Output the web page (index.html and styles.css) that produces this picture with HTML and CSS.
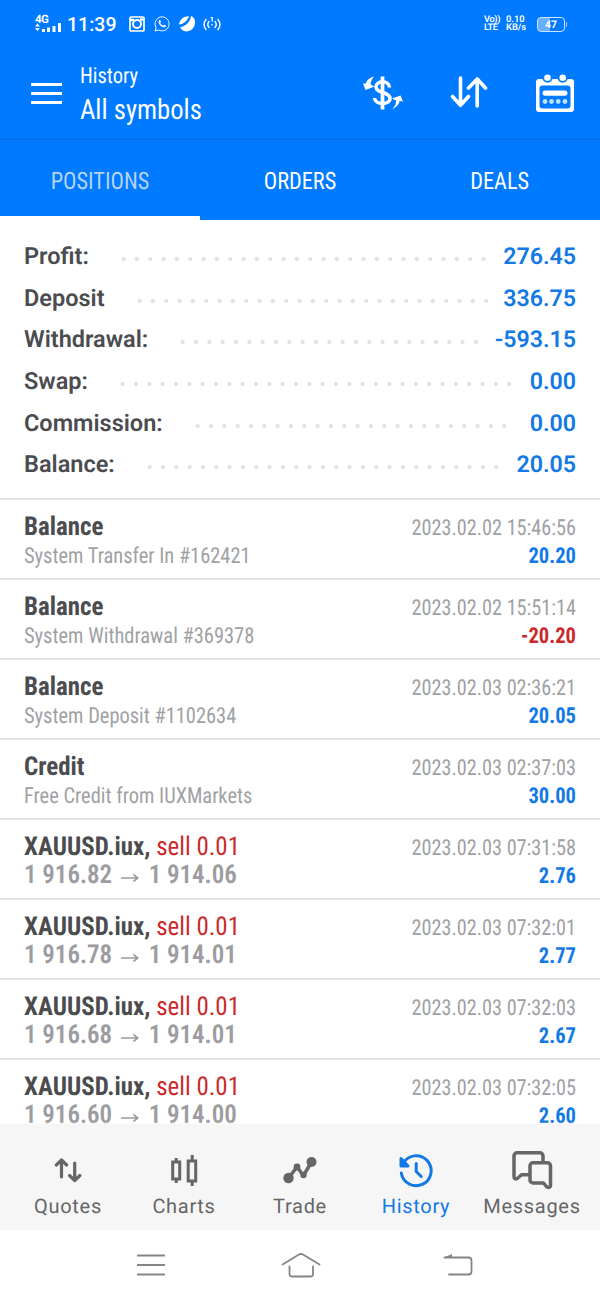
FILE: index.html
```html
<!DOCTYPE html>
<html lang="en">
<head>
<meta charset="utf-8">
<title>History</title>
<link rel="stylesheet" href="styles.css">
</head>
<body>
<div class="app">
  <header class="top">
    <div class="status">
      <div class="signal">
        <span class="net">4G</span>
        <svg width="28" height="9" viewBox="0 0 28 9" fill="#fff"><path d="M0 3.600l2.500-3 2.500 3zM0 5l2.500 3 2.500-3zM7 6h3v3H7zM12 4.500h3V9h-3zM17.500 3h3v6h-3zM23 0h3v9h-3z"/></svg>
      </div>
      <span class="clock">11:39</span>
      <svg class="st-ig" width="16" height="16" viewBox="0 0 16 16" fill="none" stroke="#fff"><rect x="1" y="1" width="14" height="14" rx="1" stroke-width="1.700"/><circle cx="8" cy="8" r="4" stroke-width="2"/><path d="M1 4h4M11 3.500h3" stroke-width="2.400"/></svg>
      <svg class="st-wa" width="16" height="16" viewBox="0 0 16 16"><path d="M1 15l1.100-3.500A7 7 0 1 1 4.700 14z" fill="none" stroke="#fff" stroke-width="1"/><path d="M5 4.200c.8-.8 1.300-.2 1.900 1.400.1.600-.6.900-.6 1.300.5 1.200 1.500 2.100 2.700 2.600.5.100.8-.9 1.300-.8 1.500.6 2 .9 1.500 1.700-.7 1.300-2.600 1-4.500-.2C5.300 8.900 3.800 6.300 5 4.200z" fill="#fff"/></svg>
      <svg class="st-ball" width="18" height="18" viewBox="0 0 18 18" fill="#fff"><path d="M1 9.500C1.500 4.500 6 1 11 1.200 10 5 5.500 9.200 1 9.500zM2 12.500C8 11 12.500 6.500 13 1c4 1.500 5 6 3.300 10.200C14 16.500 6 19 2 12.500z"/></svg>
      <svg class="st-hot" width="18" height="16" viewBox="0 0 18 16" fill="none" stroke="#fff" stroke-width="1.400" stroke-linecap="round"><path d="M3 3.500q-4 5 0 10M6 5.500q-2.500 3 0 6M15 3.500q4 5 0 10M12 5.500q2.500 3 0 6"/><path d="M8.200 1.600h1V5M9 8.500v.5"/></svg>
      <div class="tiny volte"><span>Vo))</span><span>LTE</span></div>
      <div class="tiny speed"><span>0.10</span><span>KB/s</span></div>
      <div class="battery">47</div>
    </div>
    <div class="bar">
      <svg class="menu" width="31" height="22" viewBox="0 0 31 22" fill="#fff"><path d="M0 0h31v3H0zM0 9h31v3H0zM0 18h31v3H0z"/></svg>
      <div class="heading">
        <div class="small">History</div>
        <div class="big">All symbols</div>
      </div>
      <svg class="i-dollar" width="42" height="36" viewBox="0 0 42 36" fill="none" stroke="#fff"><path d="M20.500 1.500v33" stroke-width="3.800"/><path d="M27.500 12.500C27 5 14 5 14 12c0 6.500 14 4.500 14 11.500 0 7-15 6.500-15.500-.5" stroke-width="3.500"/><path d="M12 1.500C7 3 4.500 5.500 4 8.500L1 8.500 3.500 15l9-3.500-4-2C8.800 6.500 10 4 12 1.500zM30 34.500c4.500-2.500 7.500-5.500 7.500-8.500l3.500.5L38.500 20.500 30 23.500l4 2c.3 3-1 6-4 9z" fill="#fff" stroke="none"/></svg>
      <svg class="i-sort" width="38" height="32" viewBox="0 0 38 32" fill="none" stroke="#fff" stroke-width="3.600" stroke-linecap="round" stroke-linejoin="round"><path d="M10.500 2v27M2.500 20.500l8 8.700 8-8.700M27.200 30V3M18.500 12l8.700-9 8.300 9"/></svg>
      <svg class="i-cal" width="40" height="40" viewBox="0 0 40 40"><rect x="1" y="6" width="38" height="33" rx="3" fill="#fff"/><path d="M4.500 15.500a3 3 0 0 1 3-3h25a3 3 0 0 1 3 3v17a3 3 0 0 1-3 3h-25a3 3 0 0 1-3-3z" fill="#007aff"/><g fill="#fff" stroke="#007aff" stroke-width="1.800"><circle cx="12.500" cy="4.700" r="4.200"/><circle cx="27.700" cy="4.700" r="4.200"/></g><rect x="7.500" y="17.500" width="25" height="5.200" rx="2.600" fill="#fff"/><g fill="#bfe0ff"><circle cx="10" cy="28.500" r="2.400"/><circle cx="16.500" cy="28.500" r="2.400"/><circle cx="23.200" cy="28.500" r="2.400"/><circle cx="30" cy="28.500" r="2.400"/></g></svg>
    </div>
    <div class="tabs">
      <div class="tab active"><span>POSITIONS</span></div>
      <div class="tab"><span>ORDERS</span></div>
      <div class="tab"><span>DEALS</span></div>
    </div>
  </header>

  <main class="content">
    <section class="summary">
      <div class="sum"><b>Profit:</b><div class="lead"><i></i></div><em>276.45</em></div>
      <div class="sum"><b>Deposit</b><div class="lead"><i></i></div><em>336.75</em></div>
      <div class="sum"><b>Withdrawal:</b><div class="lead"><i></i></div><em>-593.15</em></div>
      <div class="sum"><b>Swap:</b><div class="lead"><i></i></div><em>0.00</em></div>
      <div class="sum"><b>Commission:</b><div class="lead"><i></i></div><em>0.00</em></div>
      <div class="sum"><b>Balance:</b><div class="lead"><i></i></div><em>20.05</em></div>
    </section>
    <section class="list">
      <div class="item"><div class="l"><div class="t"><b>Balance</b></div><div class="s">System Transfer In #162421</div></div><div class="r"><div class="d">2023.02.02 15:46:56</div><div class="v">20.20</div></div></div>
      <div class="item"><div class="l"><div class="t"><b>Balance</b></div><div class="s">System Withdrawal #369378</div></div><div class="r"><div class="d">2023.02.02 15:51:14</div><div class="v neg">-20.20</div></div></div>
      <div class="item"><div class="l"><div class="t"><b>Balance</b></div><div class="s">System Deposit #1102634</div></div><div class="r"><div class="d">2023.02.03 02:36:21</div><div class="v">20.05</div></div></div>
      <div class="item"><div class="l"><div class="t"><b>Credit</b></div><div class="s">Free Credit from IUXMarkets</div></div><div class="r"><div class="d">2023.02.03 02:37:03</div><div class="v">30.00</div></div></div>
      <div class="item"><div class="l"><div class="t"><b>XAUUSD.iux,</b> <span class="sell">sell 0.01</span></div><div class="p">1 916.82 <svg class="arr" width="19" height="10" viewBox="0 0 19 10"><path d="M0 5h17M13 1.500l4.500 3.500-4.500 3.500"/></svg> 1 914.06</div></div><div class="r"><div class="d">2023.02.03 07:31:58</div><div class="v">2.76</div></div></div>
      <div class="item"><div class="l"><div class="t"><b>XAUUSD.iux,</b> <span class="sell">sell 0.01</span></div><div class="p">1 916.78 <svg class="arr" width="19" height="10" viewBox="0 0 19 10"><path d="M0 5h17M13 1.500l4.500 3.500-4.500 3.500"/></svg> 1 914.01</div></div><div class="r"><div class="d">2023.02.03 07:32:01</div><div class="v">2.77</div></div></div>
      <div class="item"><div class="l"><div class="t"><b>XAUUSD.iux,</b> <span class="sell">sell 0.01</span></div><div class="p">1 916.68 <svg class="arr" width="19" height="10" viewBox="0 0 19 10"><path d="M0 5h17M13 1.500l4.500 3.500-4.500 3.500"/></svg> 1 914.01</div></div><div class="r"><div class="d">2023.02.03 07:32:03</div><div class="v">2.67</div></div></div>
      <div class="item"><div class="l"><div class="t"><b>XAUUSD.iux,</b> <span class="sell">sell 0.01</span></div><div class="p">1 916.60 <svg class="arr" width="19" height="10" viewBox="0 0 19 10"><path d="M0 5h17M13 1.500l4.500 3.500-4.500 3.500"/></svg> 1 914.00</div></div><div class="r"><div class="d">2023.02.03 07:32:05</div><div class="v">2.60</div></div></div>
    </section>
  </main>

  <nav class="nav">
    <div class="nv"><svg width="48" height="40" viewBox="0 0 48 40" fill="none" stroke="#666" stroke-width="3.200" stroke-linecap="round" stroke-linejoin="round"><path d="M17.500 27V10.500M12.300 15l5.200-5 5.200 5M30.700 13v17M25.500 25.500l5.200 5 5.200-5"/></svg><span>Quotes</span></div>
    <div class="nv"><svg width="48" height="40" viewBox="0 0 48 40" fill="none" stroke="#666" stroke-width="3"><path d="M16.200 8v5M16.200 28v5M32.200 5v6M32.200 31v5"/><path d="M12.700 12h7v17h-7zM28.200 11h7.500v20h-7.500z"/></svg><span>Charts</span></div>
    <div class="nv"><svg width="48" height="40" viewBox="0 0 48 40" fill="#666" stroke="#666" stroke-width="3.500" stroke-linejoin="round"><path d="M12.500 28l8.500-11 6.500 8.500 8-13.500" fill="none"/><g stroke="none"><circle cx="12.500" cy="28" r="5.200"/><circle cx="35.500" cy="12" r="5"/><circle cx="21" cy="17" r="3.400"/><circle cx="27.500" cy="25" r="3.200"/></g></svg><span>Trade</span></div>
    <div class="nv on"><svg width="48" height="40" viewBox="0 0 48 40" fill="none" stroke="#1279e6" stroke-width="3" stroke-linecap="round" stroke-linejoin="round"><path d="M11 13.500A15 15 0 1 1 9.300 23"/><path d="M9 8.500v7.500h7z" fill="#1279e6"/><path d="M24.200 13.500v8l5 5" stroke-width="3"/></svg><span>History</span></div>
    <div class="nv"><svg width="48" height="40" viewBox="0 0 48 40" fill="none" stroke="#666" stroke-width="3.500" stroke-linejoin="round"><path d="M35 12V6a3.200 3.200 0 0 0-3.200-3.200H9.200A3.200 3.200 0 0 0 6 6v20c0 4 3 3.500 5.500.5l2-1.700H21"/><path d="M25 12.800h14.500a3 3 0 0 1 3 3V35c0 3-3 3-4.500 1l-2.500-3H25a3 3 0 0 1-3-3V15.800a3 3 0 0 1 3-3z"/></svg><span>Messages</span></div>
  </nav>

  <footer class="sys">
    <svg width="28" height="24" viewBox="0 0 28 24"><path d="M.5 2.500h27M.5 12h27M.5 21.500h27"/></svg>
    <svg class="home" width="40" height="26" viewBox="0 0 40 26"><path d="M1.500 12.500L18 2.500q2-1 4 0l16.500 10M8.500 14.500V22q0 2.500 2.500 2.500h18.500q2.500 0 2.500-2.500v-7.500"/></svg>
    <svg width="30" height="26" viewBox="0 0 30 26"><path d="M1.500 5.500h24q3 0 3 3v11q0 3-3 3H6"/><path d="M1 5.500l8-3.500v3.500z" fill="#858585" stroke="none"/></svg>
  </footer>
</div>
</body>
</html>
```
FILE: styles.css
```css
* { box-sizing: border-box; }
body { margin: 0; background: #fff; font-family: Roboto, sans-serif; text-rendering: geometricPrecision; }
svg { display: block; flex: none; }
.app { width: 600px; height: 1300px; overflow: hidden; display: flex; flex-direction: column; }

.top { flex: none; height: 220px; background: #007aff; color: #fff; }
.status { height: 48px; display: flex; align-items: center; padding-left: 35px; }
.signal { width: 28px; height: 20px; margin-right: 4px; }
.net { display: block; font-size: 11.500px; font-weight: 700; line-height: 11px; height: 9px; letter-spacing: -.5px; }
.clock { width: 52px; font-size: 19.500px; font-weight: 500; }
.st-ig { margin-left: 10px; }
.st-wa { margin-left: 9px; }
.st-ball { margin-left: 8px; }
.st-hot { margin-left: 7px; }
.tiny { display: flex; flex-direction: column; font-size: 9.300px; line-height: 8.500px; font-weight: 600; }
.volte { margin-left: 263px; width: 22px; letter-spacing: -.4px; }
.speed { width: 24px; }
.battery { margin-left: 7px; width: 28px; height: 15px; border: 1.500px solid #cde5ff; border-radius: 4px; background: linear-gradient(90deg, #66b0ff 47%, transparent 47%); font-size: 10.500px; font-weight: 700; line-height: 13px; text-align: center; position: relative; }
.battery::after { content: ""; position: absolute; right: -3px; top: 4px; width: 1.500px; height: 5px; background: #9accff; }

.bar { height: 92px; display: flex; align-items: flex-start; padding-left: 31px; border-bottom: 2px solid #0372ea; }
.menu { margin-top: 35px; }
.heading { width: 300px; padding: 15px 0 0 18px; white-space: nowrap; font-stretch: 75%; font-family: "Roboto Condensed", Roboto, sans-serif; }
.small, .big, .t, .s, .p { transform-origin: left; }
.small { font-size: 22px; line-height: 27px; transform: scaleX(.935); }
.big { font-size: 28px; line-height: 40px; transform: scaleX(.952); }
.i-dollar { margin-top: 27px; }
.i-sort { margin: 28px 0 0 46px; }
.i-cal { margin: 25px 0 0 47px; }

.tabs { height: 80px; display: flex; font-stretch: 75%; font-family: "Roboto Condensed", Roboto, sans-serif; }
.tab { flex: 1; display: flex; align-items: center; justify-content: center; font-size: 24px; padding-top: 6px; border-bottom: 4px solid transparent; }
.tab span { transform: scaleX(.93); }
.tab.active { color: #b5d2f2; border-bottom-color: #fff; }

.content { flex: 1; min-height: 0; overflow: hidden; }
.summary { height: 280px; padding: 15px 24px 0; border-bottom: 2px solid #e4e4e4; }
.sum { height: 41.700px; display: flex; align-items: center; font-size: 23.500px; }
.sum b { font-weight: 600; color: #4b4c50; }
.sum em { font-style: normal; font-weight: 600; color: #1279e6; font-size: 23.200px; }
.lead { flex: 1; margin: 6px 9px 0 28px; }
.lead i { display: block; height: 6px; width: round(down, 100%, 13.340px); background: radial-gradient(circle at center, #e2e2e2 1.700px, transparent 2.400px) 0 0 / 13.340px 6px repeat-x; }

.list { font-stretch: 75%; font-family: "Roboto Condensed", Roboto, sans-serif; white-space: nowrap; }
.item { height: 80px; padding: 11px 24px 0; border-bottom: 2px solid #e4e4e4; display: flex; justify-content: space-between; }
.t { font-size: 26px; line-height: 32px; color: #4b4c50; transform: scaleX(.96); }
.t b { font-weight: 700; }
.sell { color: #cb2a2c; }
.s { font-size: 22px; line-height: 28px; color: #a0a1a4; transform: scaleX(.929); }
.p { font-size: 26px; line-height: 24px; font-weight: 600; color: #9c9da1; transform: scaleX(.96); }
.arr { display: inline-block; margin: 0 4px 0 3px; fill: none; stroke: #9c9da1; stroke-width: 1.700; }
.r { text-align: right; }
.d, .v { transform-origin: right; }
.d { font-size: 22px; line-height: 35px; color: #a0a1a4; transform: scaleX(.919); }
.v { font-size: 22px; line-height: 22px; font-weight: 700; color: #1279e6; transform: scaleX(.935); }
.v.neg { color: #cb2a2c; }

.nav { flex: none; height: 106px; background: #f6f6f6; box-shadow: 0 0 3px #f6f6f6; display: flex; padding: 26px 10px 0; position: relative; }
.nv { flex: 1; display: flex; flex-direction: column; align-items: center; font-size: 20px; line-height: 33px; letter-spacing: .7px; color: #666; }
.nv.on { color: #1279e6; }
.sys { flex: none; height: 70px; display: flex; align-items: center; justify-content: space-between; padding: 0 127px 0 137px; }
.sys svg { fill: none; stroke: #858585; stroke-width: 1.800; stroke-linecap: round; }
.sys .home { margin-right: 7px; }
```
